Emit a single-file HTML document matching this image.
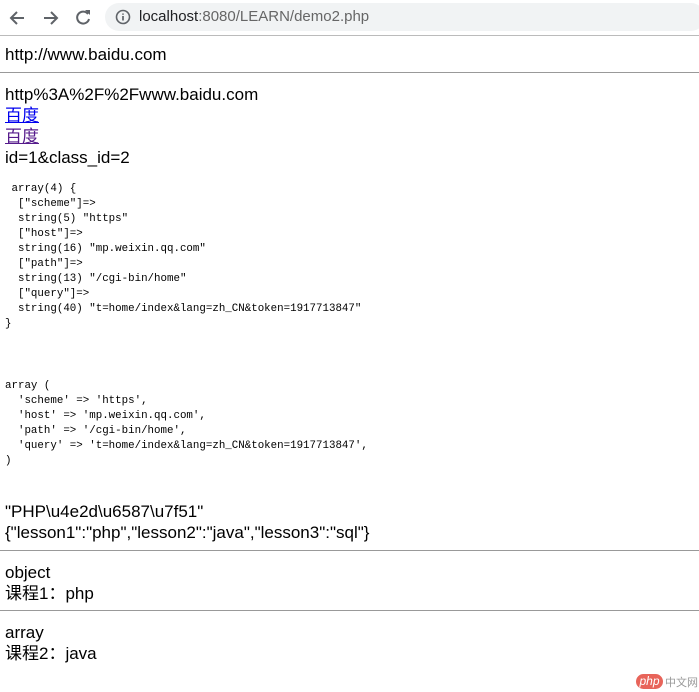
<!DOCTYPE html>
<html><head><meta charset="utf-8"><style>
body{margin:0;width:699px;height:692px;overflow:hidden;background:#fff;font-family:"Liberation Sans","Noto Sans CJK SC",sans-serif;color:#000;position:relative}
.bar{position:absolute;left:0;top:0;width:699px;height:35px;background:#fff;border-bottom:1px solid #bbb}
.pill{position:absolute;left:105px;top:3px;width:600px;height:28px;border-radius:14px;background:#f1f3f4}
.url{position:absolute;left:139px;top:8px;font-size:15px;color:#202124}
.url span{color:#666}
.t{position:absolute;left:5px;font-size:17px;line-height:21px;white-space:nowrap}
a{color:#0000ee}
a.v{color:#551a8b}
pre{position:absolute;left:5px;margin:0;font-family:"Liberation Mono",monospace;font-size:10.8px;line-height:15px}
hr{position:absolute;left:0;width:699px;margin:0;border:0;border-top:1px solid #999;height:0}
</style></head><body>
<div class="bar">
<svg style="position:absolute;left:8px;top:8px" width="20" height="20" viewBox="0 0 20 20"><path d="M16 10H4M9 4L3 10l6 6" stroke="#5f6368" stroke-width="2" fill="none"/></svg>
<svg style="position:absolute;left:40px;top:8px" width="20" height="20" viewBox="0 0 20 20"><path d="M4 10h12M11 4l6 6-6 6" stroke="#5f6368" stroke-width="2" fill="none"/></svg>
<svg style="position:absolute;left:73px;top:8px" width="20" height="20" viewBox="0 0 20 20"><path d="M15 6A6 6 0 1 0 16 11" stroke="#5f6368" stroke-width="2" fill="none"/><path d="M12 2h5v5z" fill="#5f6368"/></svg>
<div class="pill"></div>
<svg style="position:absolute;left:115px;top:9px" width="16" height="16" viewBox="0 0 16 16"><circle cx="8" cy="8" r="6.5" stroke="#5f6368" stroke-width="1.6" fill="none"/><path d="M8 7v4.5M8 4.5v1.2" stroke="#5f6368" stroke-width="1.7"/></svg>
<div class="url">localhost<span>:8080/LEARN/demo2.php</span></div>
</div>
<div class="t" style="top:44px">http://www.baidu.com</div>
<hr style="top:72px">
<div class="t" style="top:84px">http%3A%2F%2Fwww.baidu.com<br><a href="#">百度 </a><br><a class="v" href="#">百度</a><br>id=1&amp;class_id=2</div>
<pre style="top:182px"> array(4) {
  ["scheme"]=>
  string(5) "https"
  ["host"]=>
  string(16) "mp.weixin.qq.com"
  ["path"]=>
  string(13) "/cgi-bin/home"
  ["query"]=>
  string(40) "t=home/index&amp;lang=zh_CN&amp;token=1917713847"
}</pre>
<pre style="top:379px">array (
  'scheme' => 'https',
  'host' => 'mp.weixin.qq.com',
  'path' => '/cgi-bin/home',
  'query' => 't=home/index&amp;lang=zh_CN&amp;token=1917713847',
)</pre>
<div class="t" style="top:501px">"PHP\u4e2d\u6587\u7f51"<br>{"lesson1":"php","lesson2":"java","lesson3":"sql"}</div>
<hr style="top:550px">
<div class="t" style="top:562px">object<br>课程1：php</div>
<hr style="top:610px">
<div class="t" style="top:622px">array<br>课程2：java</div>
<div style="position:absolute;left:636px;top:674px;width:27px;height:15px;border-radius:8px;background:#e8645a;color:#fff;font-size:12px;line-height:14px;text-align:center;font-style:italic">php</div>
<div style="position:absolute;left:665px;top:674px;font-size:11px;color:#999">中文网</div>
</body></html>
